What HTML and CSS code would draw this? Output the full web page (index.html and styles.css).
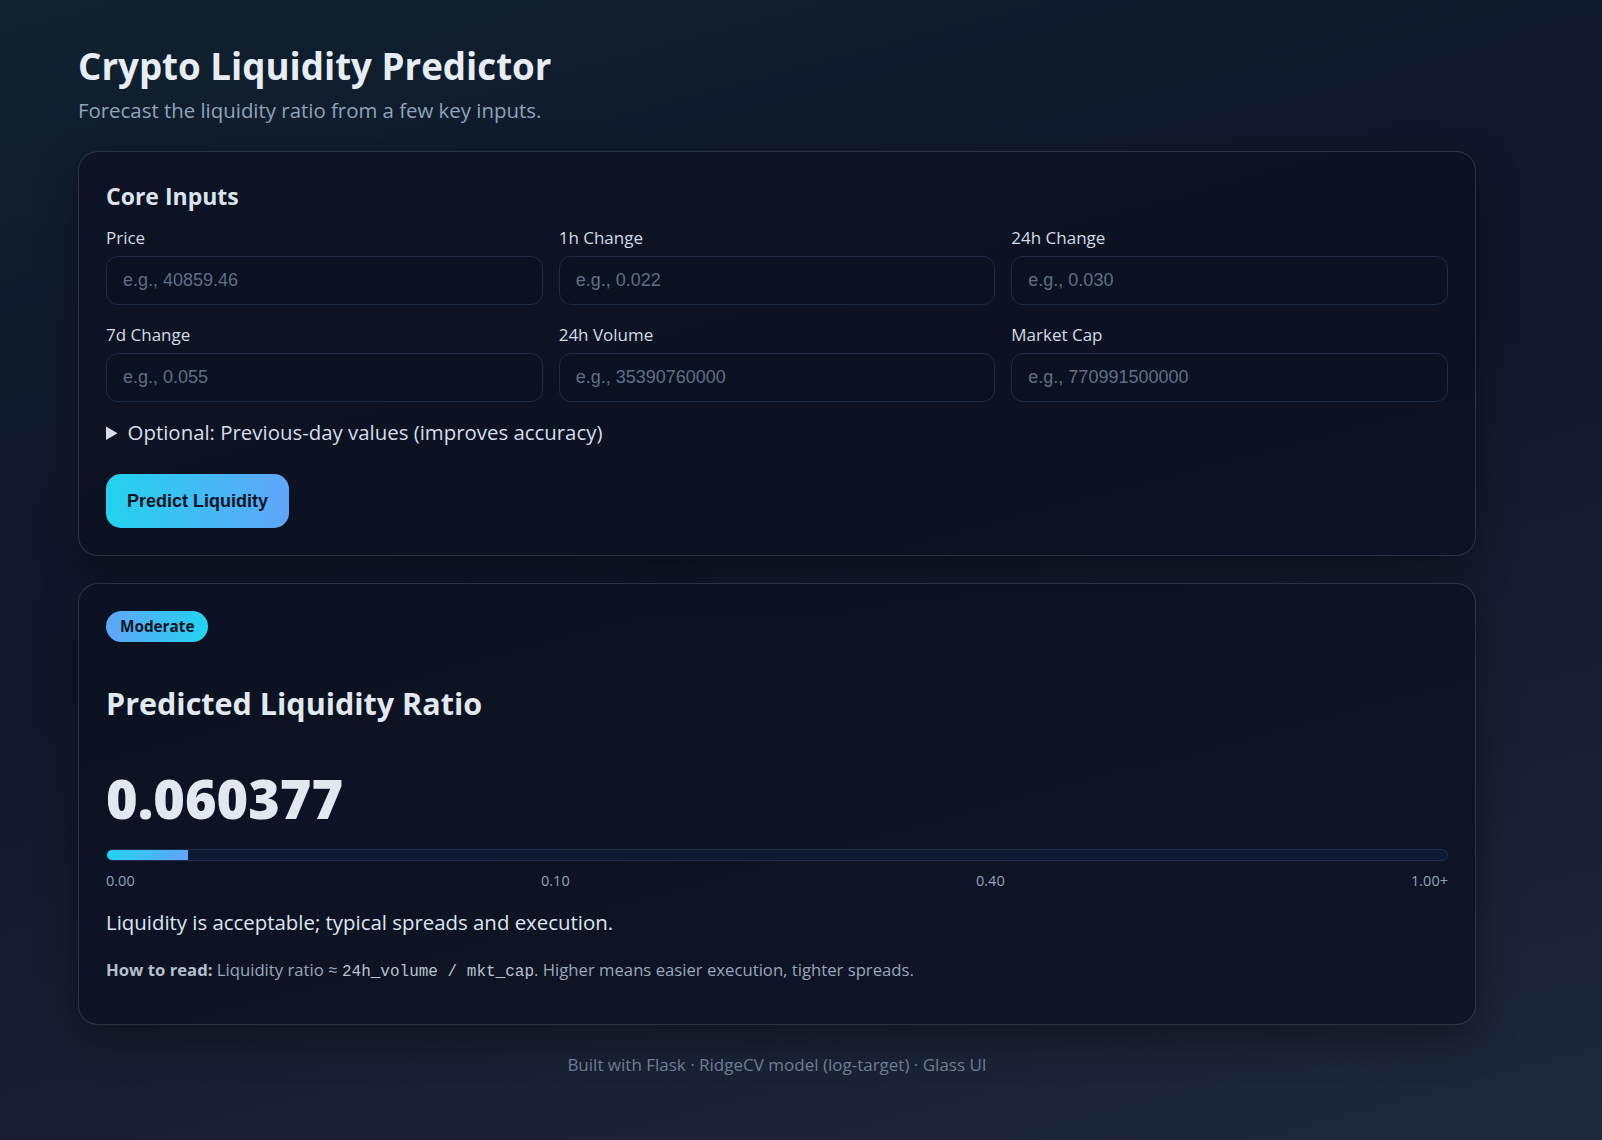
FILE: index.html
```html
<!DOCTYPE html>
<html lang="en">
<head>
<meta charset="utf-8">
<title>Crypto Liquidity Predictor</title>
<link rel="stylesheet" href="styles.css">
</head>
<body>
<main class="page">
  <header class="hero">
    <h1 class="title">Crypto Liquidity Predictor</h1>
    <p class="subtitle">Forecast the liquidity ratio from a few key inputs.</p>
  </header>

  <form class="card form-card">
    <h2 class="section-title">Core Inputs</h2>
    <div class="grid">
      <label class="field"><span class="label">Price</span><input class="input" type="text" placeholder="e.g., 40859.46"></label>
      <label class="field"><span class="label">1h Change</span><input class="input" type="text" placeholder="e.g., 0.022"></label>
      <label class="field"><span class="label">24h Change</span><input class="input" type="text" placeholder="e.g., 0.030"></label>
      <label class="field"><span class="label">7d Change</span><input class="input" type="text" placeholder="e.g., 0.055"></label>
      <label class="field"><span class="label">24h Volume</span><input class="input" type="text" placeholder="e.g., 35390760000"></label>
      <label class="field"><span class="label">Market Cap</span><input class="input" type="text" placeholder="e.g., 770991500000"></label>
    </div>
    <details class="optional">
      <summary class="optional-summary">Optional: Previous-day values (improves accuracy)</summary>
    </details>
    <button class="btn" type="button">Predict Liquidity</button>
  </form>

  <section class="card result-card">
    <span class="badge">Moderate</span>
    <h2 class="result-title">Predicted Liquidity Ratio</h2>
    <div class="value">0.060377</div>
    <div class="bar"><div class="bar-fill" style="width:6.04%"></div></div>
    <div class="scale"><span>0.00</span><span>0.10</span><span>0.40</span><span>1.00+</span></div>
    <p class="verdict">Liquidity is acceptable; typical spreads and execution.</p>
    <p class="hint"><strong class="hint-strong">How to read:</strong> Liquidity ratio ≈ <code class="code">24h_volume / mkt_cap</code>. Higher means easier execution, tighter spreads.</p>
  </section>

  <footer class="footer">Built with Flask · RidgeCV model (log-target) · Glass UI</footer>
</main>
</body>
</html>
```

FILE: styles.css
```css
* { box-sizing: border-box; }

html, body {
  margin: 0;
  padding: 0;
}

body {
  min-height: 1140px;
  font-family: "Open Sans", "Noto Sans", sans-serif;
  color: #e2e8f0;
  background: linear-gradient(165deg, #10222f 0%, #0f1a2b 22%, #0f172a 45%, #172032 75%, #1e293b 100%);
}

.page {
  width: 1398px;
  margin-left: 78px;
  padding-top: 44px;
}

.hero {
  margin-bottom: 27px;
}

.title {
  margin: 0;
  font-size: 36.7px;
  line-height: 1.2;
  font-weight: 700;
  color: #e6edf6;
}

.subtitle {
  margin: 9px 0 0;
  font-size: 20.4px;
  line-height: 1.3;
  color: #8fa3bb;
}

.card {
  background: rgba(12, 18, 34, 0.8);
  border: 1px solid rgba(148, 163, 184, 0.22);
  border-radius: 20px;
  padding: 27px 27px;
  box-shadow: 0 14px 40px rgba(0, 0, 0, 0.35);
}

.form-card {
  margin: 0 0 27px;
}

.section-title {
  margin: 3px 0 17px;
  font-size: 23px;
  line-height: 1.3;
  font-weight: 700;
  color: #dbe3ee;
}

.grid {
  display: grid;
  grid-template-columns: repeat(3, 1fr);
  column-gap: 16px;
  row-gap: 20px;
}

.field {
  display: flex;
  flex-direction: column;
  gap: 8px;
}

.label {
  font-size: 17px;
  line-height: 20px;
  color: #d3dbe6;
}

.input {
  height: 49px;
  width: 100%;
  padding: 0 16px;
  border: 1px solid #1e2b44;
  border-radius: 12px;
  background: #0a1120;
  color: #e2e8f0;
  font-family: "Liberation Sans", Arial, sans-serif;
  font-size: 18px;
  outline: none;
}

.input::placeholder {
  color: #5f6f86;
}

.optional {
  margin-top: 17px;
}

.optional-summary {
  font-size: 20.4px;
  line-height: 26px;
  color: #d6dee9;
  cursor: pointer;
}

.btn {
  margin-top: 29px;
  display: inline-block;
  height: 54px;
  padding: 0 21px;
  border: 0;
  border-radius: 15px;
  background: linear-gradient(90deg, #22d3ee 0%, #60a5fa 100%);
  color: #0b1324;
  font-family: "Liberation Sans", Arial, sans-serif;
  font-weight: 700;
  font-size: 18px;
  cursor: pointer;
}

.result-card {
  display: flex;
  flex-direction: column;
  align-items: flex-start;
  padding-bottom: 41px;
}

.badge {
  display: inline-block;
  height: 31px;
  line-height: 31px;
  padding: 0 14px;
  border-radius: 16px;
  background: linear-gradient(90deg, #60a5fa 0%, #22d3ee 100%);
  color: #0b1324;
  font-weight: 700;
  font-size: 15.3px;
}

.result-title {
  margin: 42px 0 0;
  font-size: 30.5px;
  line-height: 1.25;
  font-weight: 700;
  color: #e2e8f0;
}

.value {
  margin-top: 46px;
  font-size: 54px;
  line-height: 1.1;
  font-weight: 800;
  color: #e2e8f0;
}

.bar {
  margin-top: 21px;
  width: 100%;
  height: 12px;
  border-radius: 999px;
  background: #0e1a33;
  border: 1px solid #1f2d4a;
  overflow: hidden;
}

.bar-fill {
  height: 100%;
  background: linear-gradient(90deg, #22d3ee 0%, #60a5fa 100%);
}

.scale {
  margin-top: 10px;
  width: 100%;
  display: flex;
  justify-content: space-between;
  font-size: 14.5px;
  line-height: 20px;
  color: #94a3b8;
}

.verdict {
  margin: 18px 0 0;
  font-size: 20.4px;
  line-height: 26px;
  color: #dde6f1;
}

.hint {
  margin: 24px 0 0;
  font-size: 16.7px;
  line-height: 22px;
  color: #9aa7b9;
}

.hint-strong {
  color: #b4bfcd;
  font-weight: 700;
}

.code {
  font-family: "Liberation Mono", "DejaVu Sans Mono", monospace;
  font-size: 16px;
  color: #b9c3d0;
}

.footer {
  margin-top: 29px;
  text-align: center;
  font-size: 17px;
  line-height: 22px;
  color: #6f7d92;
}
```
